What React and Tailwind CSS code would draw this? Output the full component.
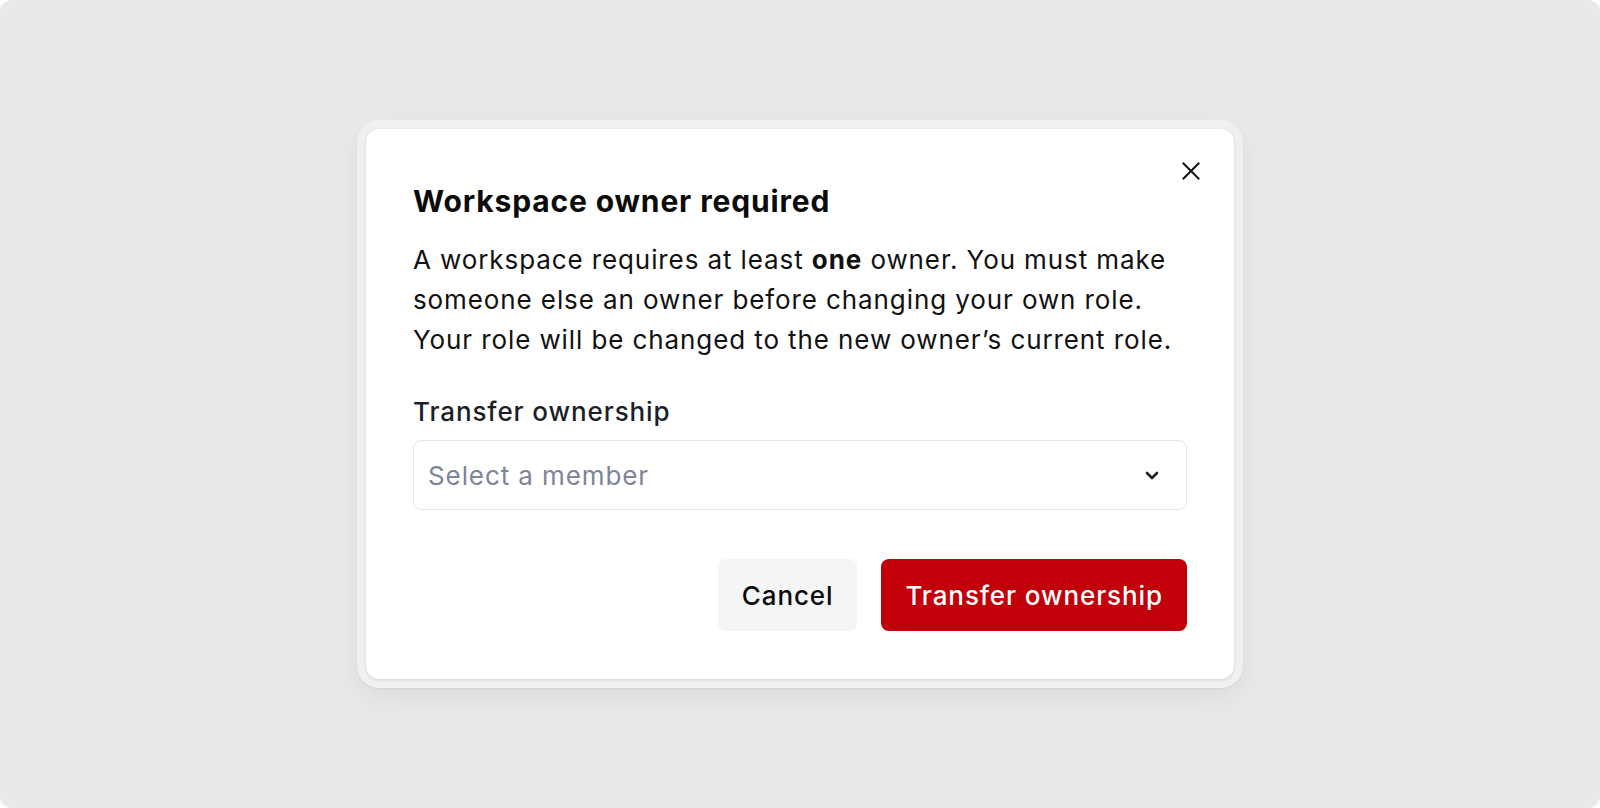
import { useState } from 'react';

const CloseIcon = () => (
  <svg width="18" height="18" viewBox="0 0 18 18" fill="none" stroke="currentColor" strokeWidth="2" strokeLinecap="square">
    <path d="M1.5 1.5L16.5 16.5M16.5 1.5L1.5 16.5" />
  </svg>
);

const ChevronIcon = () => (
  <svg width="24" height="24" viewBox="0 0 24 24" fill="none" stroke="currentColor" strokeWidth="2.6" strokeLinecap="round" strokeLinejoin="round">
    <path d="M7 10l5 5 5-5" />
  </svg>
);

const App = () => {
  const [member, setMember] = useState('');

  return (
    <div className="w-[1600px] h-[808px] bg-white font-['Inter',sans-serif]">
      <div className="w-full h-full rounded-[12px] bg-[#e8e9eb] flex items-center justify-center">
        <div className="p-[9px] rounded-[22px] bg-[#f0f0f1] shadow-[0_10px_30px_rgba(0,0,0,0.06),0_1px_2px_rgba(0,0,0,0.06)]">
          <div className="relative w-[868px] bg-white rounded-[13px] shadow-[0_1px_3px_rgba(0,0,0,0.14)] px-[47px] pt-[50px] pb-[48px]">
            <button
              type="button"
              className="absolute top-[24px] right-[25px] w-9 h-9 flex items-center justify-center text-[#111]"
            >
              <CloseIcon />
            </button>

            <h2 className="text-[30px] leading-[45px] font-bold tracking-[0.85px] text-[#0b0b0b]">
              Workspace owner required
            </h2>
            <p className="mt-4 text-[26px] leading-[40px] tracking-[0.9px] text-[#111]">
              A workspace requires at least <span className="font-bold">one</span> owner. You must make
              someone else an owner before changing your own role. Your role will be changed to the new
              owner’s current role.
            </p>

            <label className="block mt-8 text-[26px] leading-[40px] font-medium tracking-[0.9px] text-[#1c1f28]">
              Transfer ownership
            </label>
            <button
              type="button"
              onClick={() => setMember(member)}
              className="mt-2 w-full h-[70px] border border-[#e5e7ec] rounded-[8px] pl-[14px] pr-[22px] flex items-center justify-between text-[26px] tracking-[0.9px]"
            >
              <span className="text-[#7d8596]">{member || 'Select a member'}</span>
              <span className="text-[#1c1f28]">
                <ChevronIcon />
              </span>
            </button>

            <div className="mt-[49px] flex justify-end gap-6">
              <button
                type="button"
                className="h-[72px] px-6 rounded-[8px] bg-[#f4f5f5] text-[26px] font-medium tracking-[0.9px] text-[#0b0b0b]"
              >
                Cancel
              </button>
              <button
                type="button"
                className="h-[72px] px-6 rounded-[8px] bg-[#c1000a] text-[26px] font-medium tracking-[0.9px] text-white"
              >
                Transfer ownership
              </button>
            </div>
          </div>
        </div>
      </div>
    </div>
  );
};

export default App;
